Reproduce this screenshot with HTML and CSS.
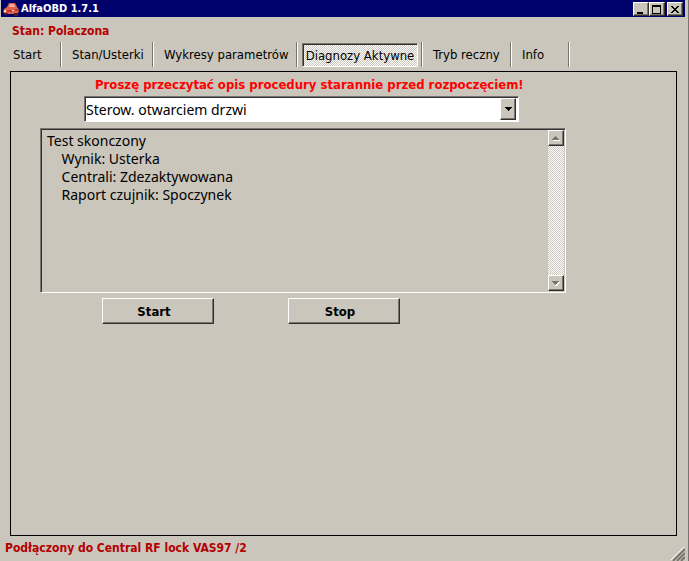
FILE: index.html
```html
<!DOCTYPE html>
<html lang="pl">
<head>
    <meta charset="UTF-8">
    <meta name="viewport" content="width=device-width, initial-scale=1.0">
    <title>AlfaOBD 1.7.1</title>
    <link rel="stylesheet" href="styles.css">
</head>
<body>
    <div class="window">
        <header class="titlebar">
            <svg class="app-icon" viewBox="0 0 16 14" aria-hidden="true">
                <path fill="#e0604c" d="M1 7 L4 5 L6 1 L12 1 L14 5 L16 8 L15 12 L2 12 L0 10 Z"/>
                <path fill="#f6b09a" d="M7 2 H11 L12 5 H6 Z"/>
                <path fill="#fbd8a8" d="M1 8 H3 V10 H1 Z M9 8 H11 V9 H9 Z"/>
                <path fill="#b83a34" d="M4 8 H9 V10 H4 Z M12 7 H15 V9 H12 Z"/>
                <path fill="#4c1c28" d="M2 11 H5 V13 H2 Z M11 11 H15 V14 H11 Z"/>
            </svg>
            <h1>AlfaOBD 1.7.1</h1>
            <div class="window-buttons">
                <button type="button" aria-label="Minimalizuj">
                    <svg viewBox="0 0 12 10"><path d="M2 8h6v2h-6z"/></svg>
                </button>
                <button type="button" aria-label="Maksymalizuj">
                    <svg viewBox="0 0 12 10"><path fill-rule="evenodd" d="M1 1h9v9h-9z M2 3v6h7v-6z"/></svg>
                </button>
                <button type="button" class="close" aria-label="Zamknij">
                    <svg viewBox="0 0 12 10"><path d="M2 2h2v1h1v1h2v-1h1v-1h2v1h-1v1h-1v1h-1v1h1v1h1v1h1v1h-2v-1h-1v-1h-2v1h-1v1h-2v-1h1v-1h1v-1h1v-1h-1v-1h-1v-1h-1z"/></svg>
                </button>
            </div>
        </header>

        <p class="state">Stan: Polaczona</p>

        <nav class="tabs">
            <div class="tab"><button type="button">Start</button></div>
            <div class="tab"><button type="button">Stan/Usterki</button></div>
            <div class="tab"><button type="button">Wykresy parametrów</button></div>
            <div class="tab"><button type="button" class="active">Diagnozy Aktywne</button></div>
            <div class="tab"><button type="button">Tryb reczny</button></div>
            <div class="tab"><button type="button">Info</button></div>
        </nav>

        <main class="panel">
            <label class="warning" for="procedure">Proszę przeczytać opis procedury starannie przed rozpoczęciem!</label>
            <div class="combo">
                <select id="procedure">
                    <option>Sterow. otwarciem drzwi</option>
                </select>
                <span class="combo-arrow"><svg viewBox="0 0 7 4"><path d="M0 0h7v1h-1v1h-1v1h-1v1h-1v-1h-1v-1h-1v-1h-1z"/></svg></span>
            </div>
            <div class="output">
                <textarea aria-label="Wynik testu" readonly>Test skonczony
    Wynik: Usterka
    Centrali: Zdezaktywowana
    Raport czujnik: Spoczynek</textarea>
                <div class="scrollbar">
                    <button type="button" aria-label="W górę" disabled>
                        <svg viewBox="0 0 8 5"><path fill="#fff" d="M1 4h7v1h-7z"/><path fill="#77736e" d="M3 0h1v1h1v1h1v1h1v1h-7v-1h1v-1h1v-1h1z"/></svg>
                    </button>
                    <button type="button" aria-label="W dół" disabled>
                        <svg viewBox="0 0 8 5"><path fill="#fff" d="M7 1h1v1h-1v1h-1v1h-1v1h-2v-1h1v-1h1v-1h1v-1z"/><path fill="#77736e" d="M0 0h7v1h-1v1h-1v1h-1v1h-1v-1h-1v-1h-1v-1h-1z"/></svg>
                    </button>
                </div>
            </div>
            <div class="actions">
                <button type="button">Start</button>
                <button type="button">Stop</button>
            </div>
        </main>

        <footer class="statusbar">
            <span>Podłączony do Central RF lock VAS97 /2</span>
            <svg class="grip" viewBox="0 0 14 14" aria-hidden="true">
                <path stroke="#fff" d="M0 13 L13 0 M4 13 L13 4 M8 13 L13 8"/>
                <path stroke="#77736e" stroke-width="2" d="M2 14 L14 2 M6 14 L14 6 M10 14 L14 10"/>
            </svg>
        </footer>
    </div>
</body>
</html>
```

FILE: styles.css
```css
* {
    box-sizing: border-box;
}
body {
    margin: 0;
    background-color: #cac6bb;
    color: black;
    font-family: "DejaVu Sans Condensed", Tahoma, "Noto Sans", sans-serif;
    font-size: 13px;
}
button, select, textarea {
    margin: 0;
    padding: 0;
    border: none;
    border-radius: 0;
    background-color: #cac6bb;
    color: black;
    font: inherit;
}
svg {
    display: block;
}
.window {
    display: flex;
    flex-direction: column;
    min-height: 100vh;
    padding: 0 2px 0 1px;
    border-right: 1px solid #77736e;
}
.titlebar {
    display: flex;
    align-items: center;
    height: 17px;
    margin-right: 1px;
    padding: 0 2px;
    background-color: #00006b;
    color: white;
}
.app-icon {
    width: 16px;
    height: 14px;
}
.titlebar h1 {
    flex: 1;
    margin: 0 0 0 2px;
    font-size: 11px;
    line-height: 16px;
}
.window-buttons {
    display: flex;
}
.window-buttons button {
    width: 16px;
    height: 14px;
    padding: 1px;
    border: 1px solid;
    border-color: white #33302f #33302f white;
    box-shadow: inset -1px -1px #77736e;
}
.window-buttons .close {
    margin-left: 2px;
}
.window-buttons svg {
    width: 12px;
    height: 10px;
}
.state {
    margin: 6px 0 2px 11px;
    color: #b40000;
    font-size: 12px;
    font-weight: bold;
    line-height: 17px;
}
.tabs {
    display: grid;
    grid-template-columns: 59px 92px 144px 125px 89px 58px;
    height: 25px;
    margin-left: 2px;
}
.tab {
    display: flex;
    border-right: 1px solid white;
    box-shadow: inset -1px 0 #77736e;
}
.tab button {
    padding: 0 0 0 10px;
    background: none;
    white-space: nowrap;
}
.tab .active {
    flex: 1;
    height: 24px;
    margin: 1px 4px 0;
    padding: 0;
    border: 1px solid;
    border-color: #77736e white white #77736e;
    background: repeating-conic-gradient(white 0 25%, #cac6bb 0 50%) 0 0 / 2px 2px;
    box-shadow: inset 1px 1px #33302f;
}
.panel {
    flex: 1;
    margin: 4px 9px 0;
    padding: 4px 29px;
    border: 1px solid black;
}
.warning {
    display: block;
    margin-left: 55px;
    color: red;
    font-weight: bold;
    line-height: 17px;
    white-space: nowrap;
}
.combo, .output {
    display: flex;
    border: 1px solid;
    border-color: #77736e white white #77736e;
    box-shadow: inset 1px 1px #33302f;
    font-family: "Noto Sans", Tahoma, sans-serif;
    font-size: 14px;
}
.combo {
    max-width: 435px;
    height: 26px;
    margin: 3px 0 0 44px;
    padding: 1px 2px 1px 1px;
    background-color: white;
}
.combo select {
    flex: 1;
    min-width: 0;
    margin-top: 1px;
    appearance: none;
    background-color: white;
}
.combo-arrow {
    display: grid;
    place-items: center;
    width: 16px;
    border: 1px solid;
    border-color: white #33302f #33302f white;
    background-color: #cac6bb;
    box-shadow: inset -1px -1px #77736e;
}
.combo-arrow svg {
    width: 7px;
    height: 4px;
}
.output {
    max-width: 526px;
    height: 165px;
    margin-top: 6px;
    padding: 1px 1px 1px 2px;
}
.output textarea {
    flex: 1;
    min-width: 0;
    padding: 2px 4px;
    outline: none;
    resize: none;
    overflow: hidden;
    line-height: 18px;
}
.scrollbar {
    display: flex;
    flex-direction: column;
    justify-content: space-between;
    width: 16px;
    background: repeating-conic-gradient(white 0 25%, #cac6bb 0 50%) 0 0 / 2px 2px;
}
.scrollbar button {
    display: grid;
    place-items: center;
    height: 16px;
    border: 1px solid;
    border-color: white #33302f #33302f white;
    box-shadow: inset -1px -1px #77736e;
}
.scrollbar svg {
    width: 8px;
    height: 5px;
}
.actions {
    display: flex;
    gap: 74px;
    margin: 5px 0 0 62px;
}
.actions button {
    width: 112px;
    height: 26px;
    padding: 0 8px 0 0;
    border: 1px solid;
    border-color: white #33302f #33302f white;
    box-shadow: inset -1px -1px #77736e;
    font-weight: bold;
}
.statusbar {
    display: flex;
    justify-content: space-between;
    align-items: flex-start;
    height: 25px;
    padding: 4px 1px 0 4px;
    color: #b40000;
    font-size: 12px;
    font-weight: bold;
    line-height: 17px;
}
.grip {
    align-self: flex-end;
    width: 14px;
    height: 14px;
}
```
